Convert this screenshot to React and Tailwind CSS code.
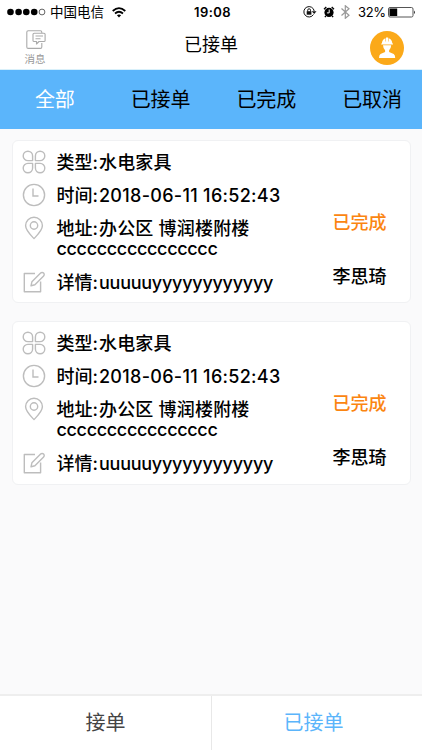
import React from "react";

const stroke = { fill: "none", stroke: "#bdbdbd", strokeWidth: 1.4 };

function CloverIcon() {
  const petal = "M10.600 10.600H5.900A4.700 4.700 0 1 1 10.600 5.900Z";
  return (
    <svg width="24" height="24" viewBox="0 0 24 24" {...stroke} strokeLinejoin="round">
      <path d={petal} />
      <path d={petal} transform="translate(24 0) scale(-1 1)" />
      <path d={petal} transform="translate(0 24) scale(1 -1)" />
      <path d={petal} transform="translate(24 24) scale(-1 -1)" />
    </svg>
  );
}

function ClockIcon() {
  return (
    <svg width="24" height="24" viewBox="0 0 24 24" {...stroke}>
      <circle cx="12" cy="12" r="10.6" />
      <path d="M11 5.500V13H16.500" />
    </svg>
  );
}

function PinIcon() {
  return (
    <svg width="24" height="24" viewBox="0 0 24 24" {...stroke} strokeLinejoin="round">
      <path d="M12 22.600C8.500 19 3.600 14.500 3.600 9.600a8.400 8.400 0 0 1 16.800 0C20.400 14.500 15.500 19 12 22.600Z" />
      <circle cx="12" cy="9.500" r="3.700" />
    </svg>
  );
}

function EditIcon() {
  return (
    <svg width="24" height="24" viewBox="0 0 24 24" {...stroke} strokeLinejoin="round">
      <path d="M13 3.500H2.300V21.700H18.600V11.500" />
      <path d="M9 15.800L9.900 11.800L18.600 3.100a2.100 2.100 0 0 1 3 3L12.900 14.800Z" />
    </svg>
  );
}

function StatusBar() {
  return (
    <div className="flex h-6 items-center">
      <svg className="ml-[7px] shrink-0" width="40" height="8" viewBox="0 0 40 8">
        <circle cx="3.500" cy="4" r="3.300" />
        <circle cx="11.600" cy="4" r="3.300" />
        <circle cx="19.300" cy="4" r="3.300" />
        <circle cx="27.200" cy="4" r="3.300" />
        <circle cx="35" cy="4" r="2.900" fill="none" stroke="#222" strokeWidth="0.700" />
      </svg>
      <span className="ml-[3px] w-[54px] whitespace-nowrap text-[13.500px] leading-6">中国电信</span>
      <svg className="ml-2 shrink-0" width="14" height="11" viewBox="0 0 14 11" fill="none" stroke="#000" strokeWidth="1.700">
        <path d="M.7 4Q7-1.700 13.300 4M3 6.500Q7 3 11 6.500" />
        <path d="M4.900 8.300Q7 6.700 9.100 8.300L7 10.500Z" fill="#000" stroke="none" />
      </svg>
      <span className="ml-[68px] w-[38px] whitespace-nowrap text-[13px] font-semibold leading-6 tracking-[0.450px]">19:08</span>
      <svg className="ml-[71px] shrink-0" width="14" height="12" viewBox="0 0 14 12" fill="none" stroke="#111" strokeWidth="1">
        <path d="M10.500 8.500A5.200 5.200 0 1 1 11.200 5" />
        <path d="M8.700 5.200H13.500L11.200 8Z" fill="#111" stroke="none" />
        <path d="M4.700 5.500V4.200a1.400 1.400 0 0 1 2.800 0V5.500" />
        <rect x="3.700" y="5.200" width="4.700" height="3.500" fill="#111" stroke="none" />
      </svg>
      <svg className="ml-[6px] shrink-0" width="12" height="12" viewBox="0 0 12 12">
        <circle cx="6" cy="6.400" r="4.600" />
        <path d="M1 3.200L3.300 1M11 3.200L8.700 1M2.800 10L1.900 11.100M9.200 10L10.100 11.100" stroke="#000" strokeWidth="1.300" />
        <path d="M6.200 3.500V6.900H3.900" fill="none" stroke="#fff" strokeWidth="1" />
      </svg>
      <svg className="ml-1.5 shrink-0" width="9" height="14" viewBox="0 0 9 14" fill="none" stroke="#999" strokeWidth="1.200">
        <path d="M.5 3.500L8 10.300L4.300 13.300V.7L8 3.700L.5 10.500" />
      </svg>
      <span className="ml-2 w-[28px] whitespace-nowrap text-[13px] leading-6 tracking-[-0.400px]">32%</span>
      <svg className="ml-0.5 shrink-0" width="28" height="11" viewBox="0 0 28 11">
        <rect x=".5" y=".5" width="24.500" height="9.500" rx="1.500" fill="none" stroke="#555" />
        <rect x="1.500" y="1.500" width="7.700" height="7.500" />
        <path d="M26 3.500Q28 5.300 26 7Z" fill="#333" />
      </svg>
    </div>
  );
}

function Header() {
  return (
    <header className="grid h-[46px] grid-cols-[70px_1fr_70px] border-b border-[#d9f0fa]">
      <div className="flex flex-col items-center pt-1.5 text-[#999]">
        <svg className="ml-px" width="20" height="20" viewBox="0 0 20 20" fill="none" stroke="#aaa" strokeWidth="1.100" strokeLinejoin="round">
          <path d="M15.800 3V2.200Q15.800.8 14.400.8H2.200Q.8.8.8 2.200V17Q.8 18.400 2.200 18.400H14.400Q15.800 18.400 15.800 17V13" />
          <path d="M8.200 3.200H18Q19.100 3.200 19.100 4.300V10.400Q19.100 11.500 18 11.500H13L10.500 14V11.500H8.200Q7 11.500 7 10.400V4.300Q7 3.200 8.200 3.200ZM9.500 6H17M9.500 8.700H14.500" />
        </svg>
        <span className="mt-[3px] text-[10.500px] leading-[14px]">消息</span>
      </div>
      <h1 className="pt-[6px] text-center text-[18px] leading-[30px]">已接单</h1>
      <div className="pt-[7px]">
        <svg className="ml-[18px]" width="34" height="34" viewBox="0 0 34 34">
          <circle cx="17" cy="17" r="17" fill="#fba919" />
          <g fill="#fff">
            <path d="M11.900 12.500Q12 8.500 15.500 7.300V10.500H16V6.600H18.200V10.500H18.700V7.300Q22.200 8.500 22.300 12.500H23V13.500H11.200V12.500Z" />
            <path d="M13 14.200H21.200Q21 17.500 19.100 19.300V21.100L23.700 23.100Q25.200 24 25.200 27H9Q9 24 10.500 23.100L15.100 21.100V19.300Q13.200 17.500 13 14.200Z" />
          </g>
        </svg>
      </div>
    </header>
  );
}

function Tabs() {
  return (
    <nav className="bg-[#5bb5fb] pl-0.5">
      <div className="-mr-[3px] grid h-[58.500px] grid-cols-4 text-center text-[20px] leading-[61px]">
        <span className="text-white">全部</span>
        <span>已接单</span>
        <span>已完成</span>
        <span>已取消</span>
      </div>
    </nav>
  );
}

function Row({ icon, label, className, children }) {
  return (
    <div className={"flex items-start " + className}>
      <div className="mr-[11px] shrink-0">{icon}</div>
      <div className="whitespace-nowrap pt-px text-[18px] font-medium leading-6">
        {label}
        <span className="mr-px">:</span>
        {children}
      </div>
    </div>
  );
}

function OrderCard() {
  return (
    <article className="flex h-[163.500px] rounded-md border border-[#f0f1f3] bg-white pl-[9px]">
      <div className="w-[309px] shrink-0 pt-[9px]">
        <Row icon={<CloverIcon />} label="类型" className="h-[33px]">
          <span className="tracking-[0.200px]">水电家具</span>
        </Row>
        <Row icon={<ClockIcon />} label="时间" className="h-[33px]">
          <span className="tracking-[0.300px]">2018-06-11 16:52:43</span>
        </Row>
        <Row icon={<PinIcon />} label="地址" className="h-[54px]">
          <span className="tracking-[0.200px]">办公区 博润楼附楼</span>
          <div className="-mt-[3px] leading-[22px] tracking-[-0.330px]">cccccccccccccccc</div>
        </Row>
        <Row icon={<EditIcon />} label="详情" className="h-6">
          <span className="tracking-[-0.250px]">uuuuuyyyyyyyyyyyy</span>
        </Row>
      </div>
      <div className="whitespace-nowrap pt-[70px] text-[18px] font-medium leading-6">
        <div className="ml-0.5 text-[#fb8511]">已完成</div>
        <div className="ml-0.5 mt-[30px]">李思琦</div>
      </div>
    </article>
  );
}

export default function App() {
  return (
    <div className="flex h-[750px] w-[422px] flex-col overflow-hidden bg-white font-['Inter','Noto_Sans_CJK_SC',sans-serif] text-black">
      <StatusBar />
      <Header />
      <Tabs />
      <main className="flex flex-1 flex-col gap-[18px] bg-[#fafafb] px-[11.500px] pt-[11px]">
        <OrderCard />
        <OrderCard />
      </main>
      <footer className="grid h-14 grid-cols-[212px_210px] border-t-2 border-[#eeeeee] text-center text-[20px] leading-[55px]">
        <span className="border-r border-[#e8e8e8] text-[#444]">接单</span>
        <span className="pr-[7px] text-[#5bb5fb]">已接单</span>
      </footer>
    </div>
  );
}
